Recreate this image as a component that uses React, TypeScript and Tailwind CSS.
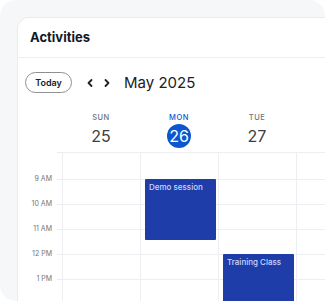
import React from "react";

const days = [
  { name: "SUN", date: 25 },
  { name: "MON", date: 26, today: true },
  { name: "TUE", date: 27 },
  { name: "WED", date: 28 },
];

const hours = ["9 AM", "10 AM", "11 AM", "12 PM", "1 PM"];

function Chevron({ dir }: { dir: "left" | "right" }) {
  return (
    <svg width="8" height="10" viewBox="0 0 8 10" className="text-[#202124]">
      {dir === "left" ? (
        <polyline points="5.5,2 2.5,5 5.5,8" fill="none" stroke="currentColor" strokeWidth="1.8" strokeLinecap="round" strokeLinejoin="round" />
      ) : (
        <polyline points="2.5,2 5.5,5 2.5,8" fill="none" stroke="currentColor" strokeWidth="1.8" strokeLinecap="round" strokeLinejoin="round" />
      )}
    </svg>
  );
}

export default function App() {
  return (
    <div className="w-[327px] h-[303px] bg-white font-['Inter',sans-serif]">
      <div className="w-[325px] h-[301px] rounded-[16px] bg-[#f6f7f9] overflow-hidden pl-[17px] pt-[17px]">
        <div className="w-[340px] h-[300px] bg-white border border-[#e9ebee] rounded-tl-[12px] overflow-hidden">
          {/* header */}
          <div className="h-[40px] border-b border-[#eceef1] flex items-center px-[12px]">
            <span className="text-[13px] font-bold text-[#111827]">Activities</span>
          </div>

          {/* toolbar */}
          <div className="flex items-center pt-[14px] pl-[7px]">
            <button className="h-[21px] w-[47px] rounded-full border border-[#8d9094] text-[9px] font-semibold text-[#202124] flex items-center justify-center">
              Today
            </button>
            <div className="flex items-center gap-[9px] ml-[14px]">
              <Chevron dir="left" />
              <Chevron dir="right" />
            </div>
            <span className="ml-[13px] text-[15px] text-[#202124] leading-none">May 2025</span>
          </div>

          {/* day headers */}
          <div className="mt-[7px] grid grid-cols-[44px_78px_78px_78px_78px] h-[52px]">
            <div />
            {days.map((d) => (
              <div key={d.name} className="flex flex-col items-center pt-[13px]">
                <span className={`text-[7.5px] leading-[10px] font-medium tracking-[0.5px] ${d.today ? "text-[#0b57d0]" : "text-[#70757a]"}`}>
                  {d.name}
                </span>
                <span
                  className={`mt-[1px] w-[24px] h-[24px] rounded-full flex items-center justify-center text-[16px] ${
                    d.today ? "bg-[#0b57d0] text-white" : "text-[#3c4043]"
                  }`}
                >
                  {d.date}
                </span>
              </div>
            ))}
          </div>

          {/* body */}
          <div className="relative">
            <div className="ml-[39px] border-t border-[#eceef1] h-[27px]" />
            {hours.map((h) => (
              <div key={h} className="flex h-[25px]">
                <span className="self-start w-[34px] h-[10px] text-right text-[7px] leading-[10px] text-[#70757a] -translate-y-1/2">
                  {h}
                </span>
                <div className="ml-[5px] flex-1 border-t border-[#eceef1]" />
              </div>
            ))}

            <div className="absolute top-0 bottom-0 left-[44px] grid grid-cols-[78px_78px_78px_78px]">
              {days.map((d, i) => (
                <div key={d.name} className="relative border-l border-[#eceef1]">
                  {i === 1 && (
                    <div className="absolute left-[4px] top-[27px] w-[71px] h-[61px] bg-[#1e3da9] rounded-[1px] px-[4px] pt-[3px] text-[8px] leading-[11px] font-medium text-[#cdd7ff]">
                      Demo session
                    </div>
                  )}
                  {i === 2 && (
                    <div className="absolute left-[4px] top-[102px] w-[71px] h-[60px] bg-[#1e3da9] rounded-[1px] px-[4px] pt-[3px] text-[8px] leading-[11px] font-medium text-[#cdd7ff]">
                      Training Class
                    </div>
                  )}
                </div>
              ))}
            </div>
          </div>
        </div>
      </div>
    </div>
  );
}
